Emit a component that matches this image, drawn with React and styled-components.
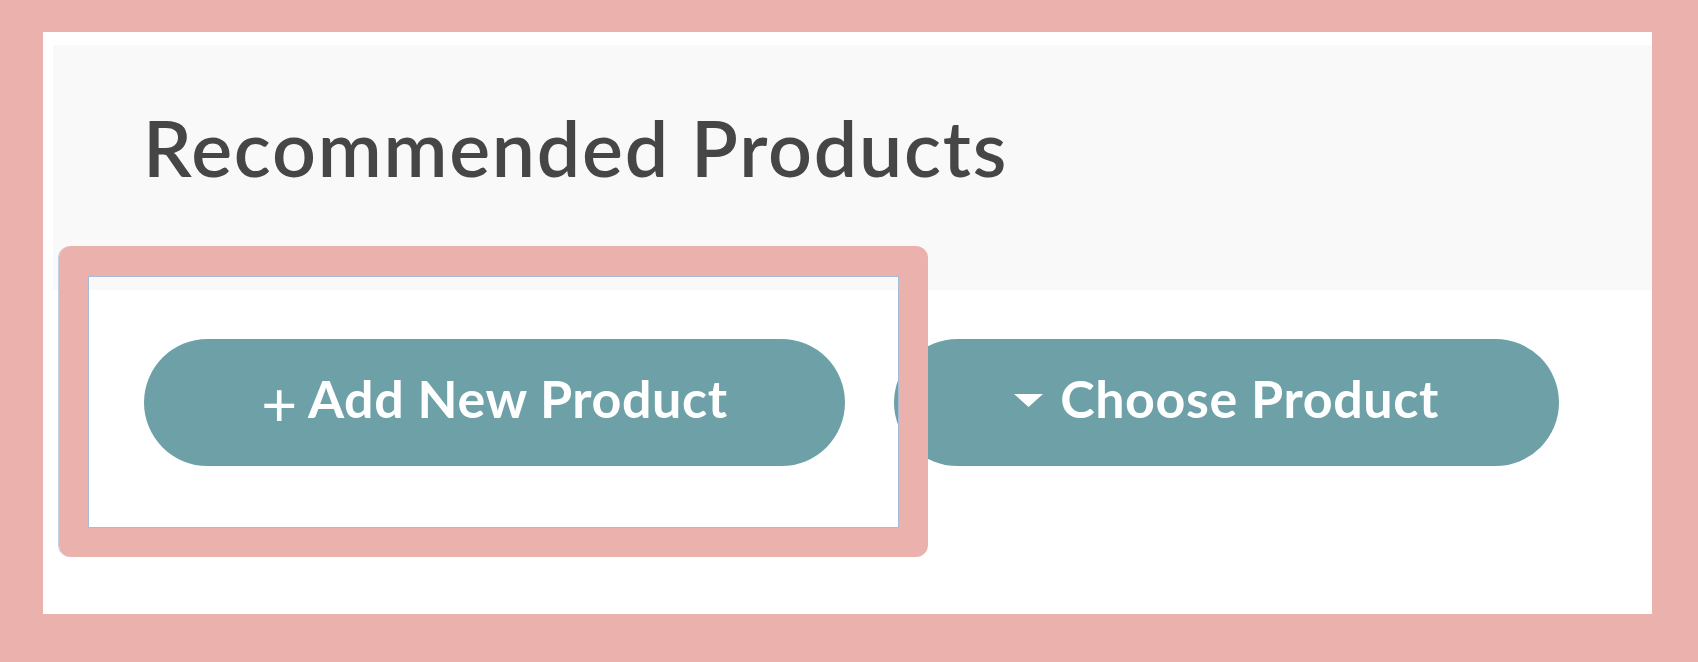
import React from "react";
import styled, { createGlobalStyle } from "styled-components";

const GlobalStyle = createGlobalStyle`
  html, body {
    margin: 0;
    padding: 0;
    background-color: #ebb1ad;
  }

  body {
    width: 1698px;
    height: 662px;
    overflow: hidden;
    font-family: Lato, "Liberation Sans", sans-serif;
  }
`;

const Frame = styled.div`
  padding: 32px 46px 48px 43px;
`;

const Card = styled.section`
  position: relative;
  height: 582px;
  background-color: #ffffff;
  padding: 13px 0 0 10px;
  box-sizing: border-box;
`;

const Header = styled.header`
  height: 245px;
  background-color: #f9f9f9;
  padding: 64px 0 0 90px;
  box-sizing: border-box;
`;

const Title = styled.h2`
  margin: 0;
  font-size: 77px;
  line-height: 1;
  font-weight: 600;
  color: #464646;
  letter-spacing: 1.8px;
`;

const ButtonRow = styled.div`
  display: flex;
  gap: 49px;
  margin-top: 49px;
  padding-left: 91px;
`;

const PillButton = styled.button`
  display: flex;
  align-items: center;
  justify-content: center;
  gap: ${(p) => p.$gap || 10}px;
  width: ${(p) => p.$width}px;
  height: 127px;
  border: none;
  border-radius: 64px;
  background-color: #6ea1a7;
  color: #ffffff;
  font-family: Lato, "Liberation Sans", sans-serif;
  font-size: 52px;
  font-weight: 700;
  letter-spacing: 0.6px;
  cursor: pointer;
  padding: 0 0 10px;
  box-sizing: border-box;
`;

const Plus = styled.span`
  font-weight: 400;
  font-size: 62px;
  line-height: 1;
  margin-top: 8px;
`;

const Caret = styled.svg`
  width: 29px;
  height: 13px;
  margin-top: 6px;
`;

const Highlight = styled.div`
  position: absolute;
  left: 16px;
  top: 214px;
  width: 869px;
  height: 311px;
  box-sizing: border-box;
  border: 29px solid #ebb1ad;
  border-top-width: 30px;
  border-radius: 12px;
  box-shadow: inset 0 0 0 1px #a9b9d8, -1px 0 0 #c4d0e6;
  pointer-events: none;
`;

export default function App() {
  return (
    <>
      <GlobalStyle />
      <Frame>
        <Card>
          <Header>
            <Title>Recommended Products</Title>
          </Header>
          <ButtonRow>
            <PillButton $width={701} $gap={10}>
              <Plus>+</Plus>
              Add New Product
            </PillButton>
            <PillButton $width={665} $gap={17}>
              <Caret viewBox="0 0 29 13">
                <polygon points="0,0 29,0 14.5,13" fill="#ffffff" />
              </Caret>
              Choose Product
            </PillButton>
          </ButtonRow>
          <Highlight />
        </Card>
      </Frame>
    </>
  );
}
